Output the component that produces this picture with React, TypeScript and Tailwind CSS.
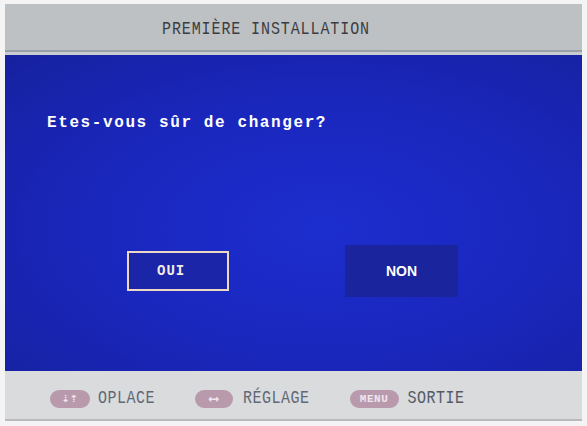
import React from "react";

const mono = { fontFamily: '"Liberation Mono", "DejaVu Sans Mono", monospace' };

const Key: React.FC<{ label: string; width: string; size: string }> = ({ label, width, size }) => (
  <span
    className={`${width} ${size} h-[18px] rounded-full bg-[#b99aac] text-[#efe4ee] font-bold flex items-center justify-center`}
  >
    {label}
  </span>
);

export default function App() {
  return (
    <div className="w-[587px] h-[426px] bg-[#f4f4f4] pt-[4px] px-[5px] pb-[5px] flex flex-col overflow-hidden" style={mono}>
      {/* header */}
      <div className="h-[46px] bg-[#bec1c3] flex items-center pl-[157px] pt-[7px]">
        <span className="inline-block text-[15px] tracking-[0.9px] text-[#3a3d44] scale-y-125">PREMIÈRE INSTALLATION</span>
      </div>
      <div className="h-[2px] bg-[#9aa0a8]" />
      <div className="h-[3px] bg-[#c9ccd0]" />

      {/* main blue panel */}
      <div className="flex-1 bg-[radial-gradient(ellipse_at_55%_55%,#1d2ecf_0%,#1a27bd_50%,#16219f_100%)] flex flex-col">
        <div className="pt-[56px] pl-[42px] text-white font-bold text-[16px] tracking-[1.6px]">
          Etes-vous sûr de changer?
        </div>
        <div className="mt-[110px] flex items-center">
          <div className="ml-[122px] w-[102px] h-[40px] border-2 border-[#ecd8c4] bg-[#1b25a8] flex items-center pl-[28px]">
            <span className="text-[#f3ece4] font-bold text-[14px] tracking-[1px]">OUI</span>
          </div>
          <div className="ml-[116px] w-[113px] h-[52px] bg-[#1a249c] flex items-center justify-center">
            <span className="text-white font-bold text-[14px]" style={{ fontFamily: '"Liberation Sans", Arial, sans-serif' }}>
              NON
            </span>
          </div>
        </div>
      </div>

      {/* footer */}
      <div className="h-[50px] bg-[#d9dbdd] border-b-2 border-[#b8babd] flex items-center pt-[8px] pl-[45px] text-[15px] text-[#626876] tracking-[0.5px]">
        <Key label="⇣⇡" width="w-[40px]" size="text-[13px]" />
        <span className="ml-[8px] inline-block scale-y-[1.2]">OPLACE</span>
        <span className="ml-[40px]">
          <Key label="⟷" width="w-[38px]" size="text-[14px]" />
        </span>
        <span className="ml-[10px] inline-block scale-y-[1.2]">RÉGLAGE</span>
        <span className="ml-[40px]">
          <Key label="MENU" width="w-[49px]" size="text-[11px]" />
        </span>
        <span className="ml-[9px] inline-block scale-y-[1.2] text-[#555a66]">SORTIE</span>
      </div>
    </div>
  );
}
